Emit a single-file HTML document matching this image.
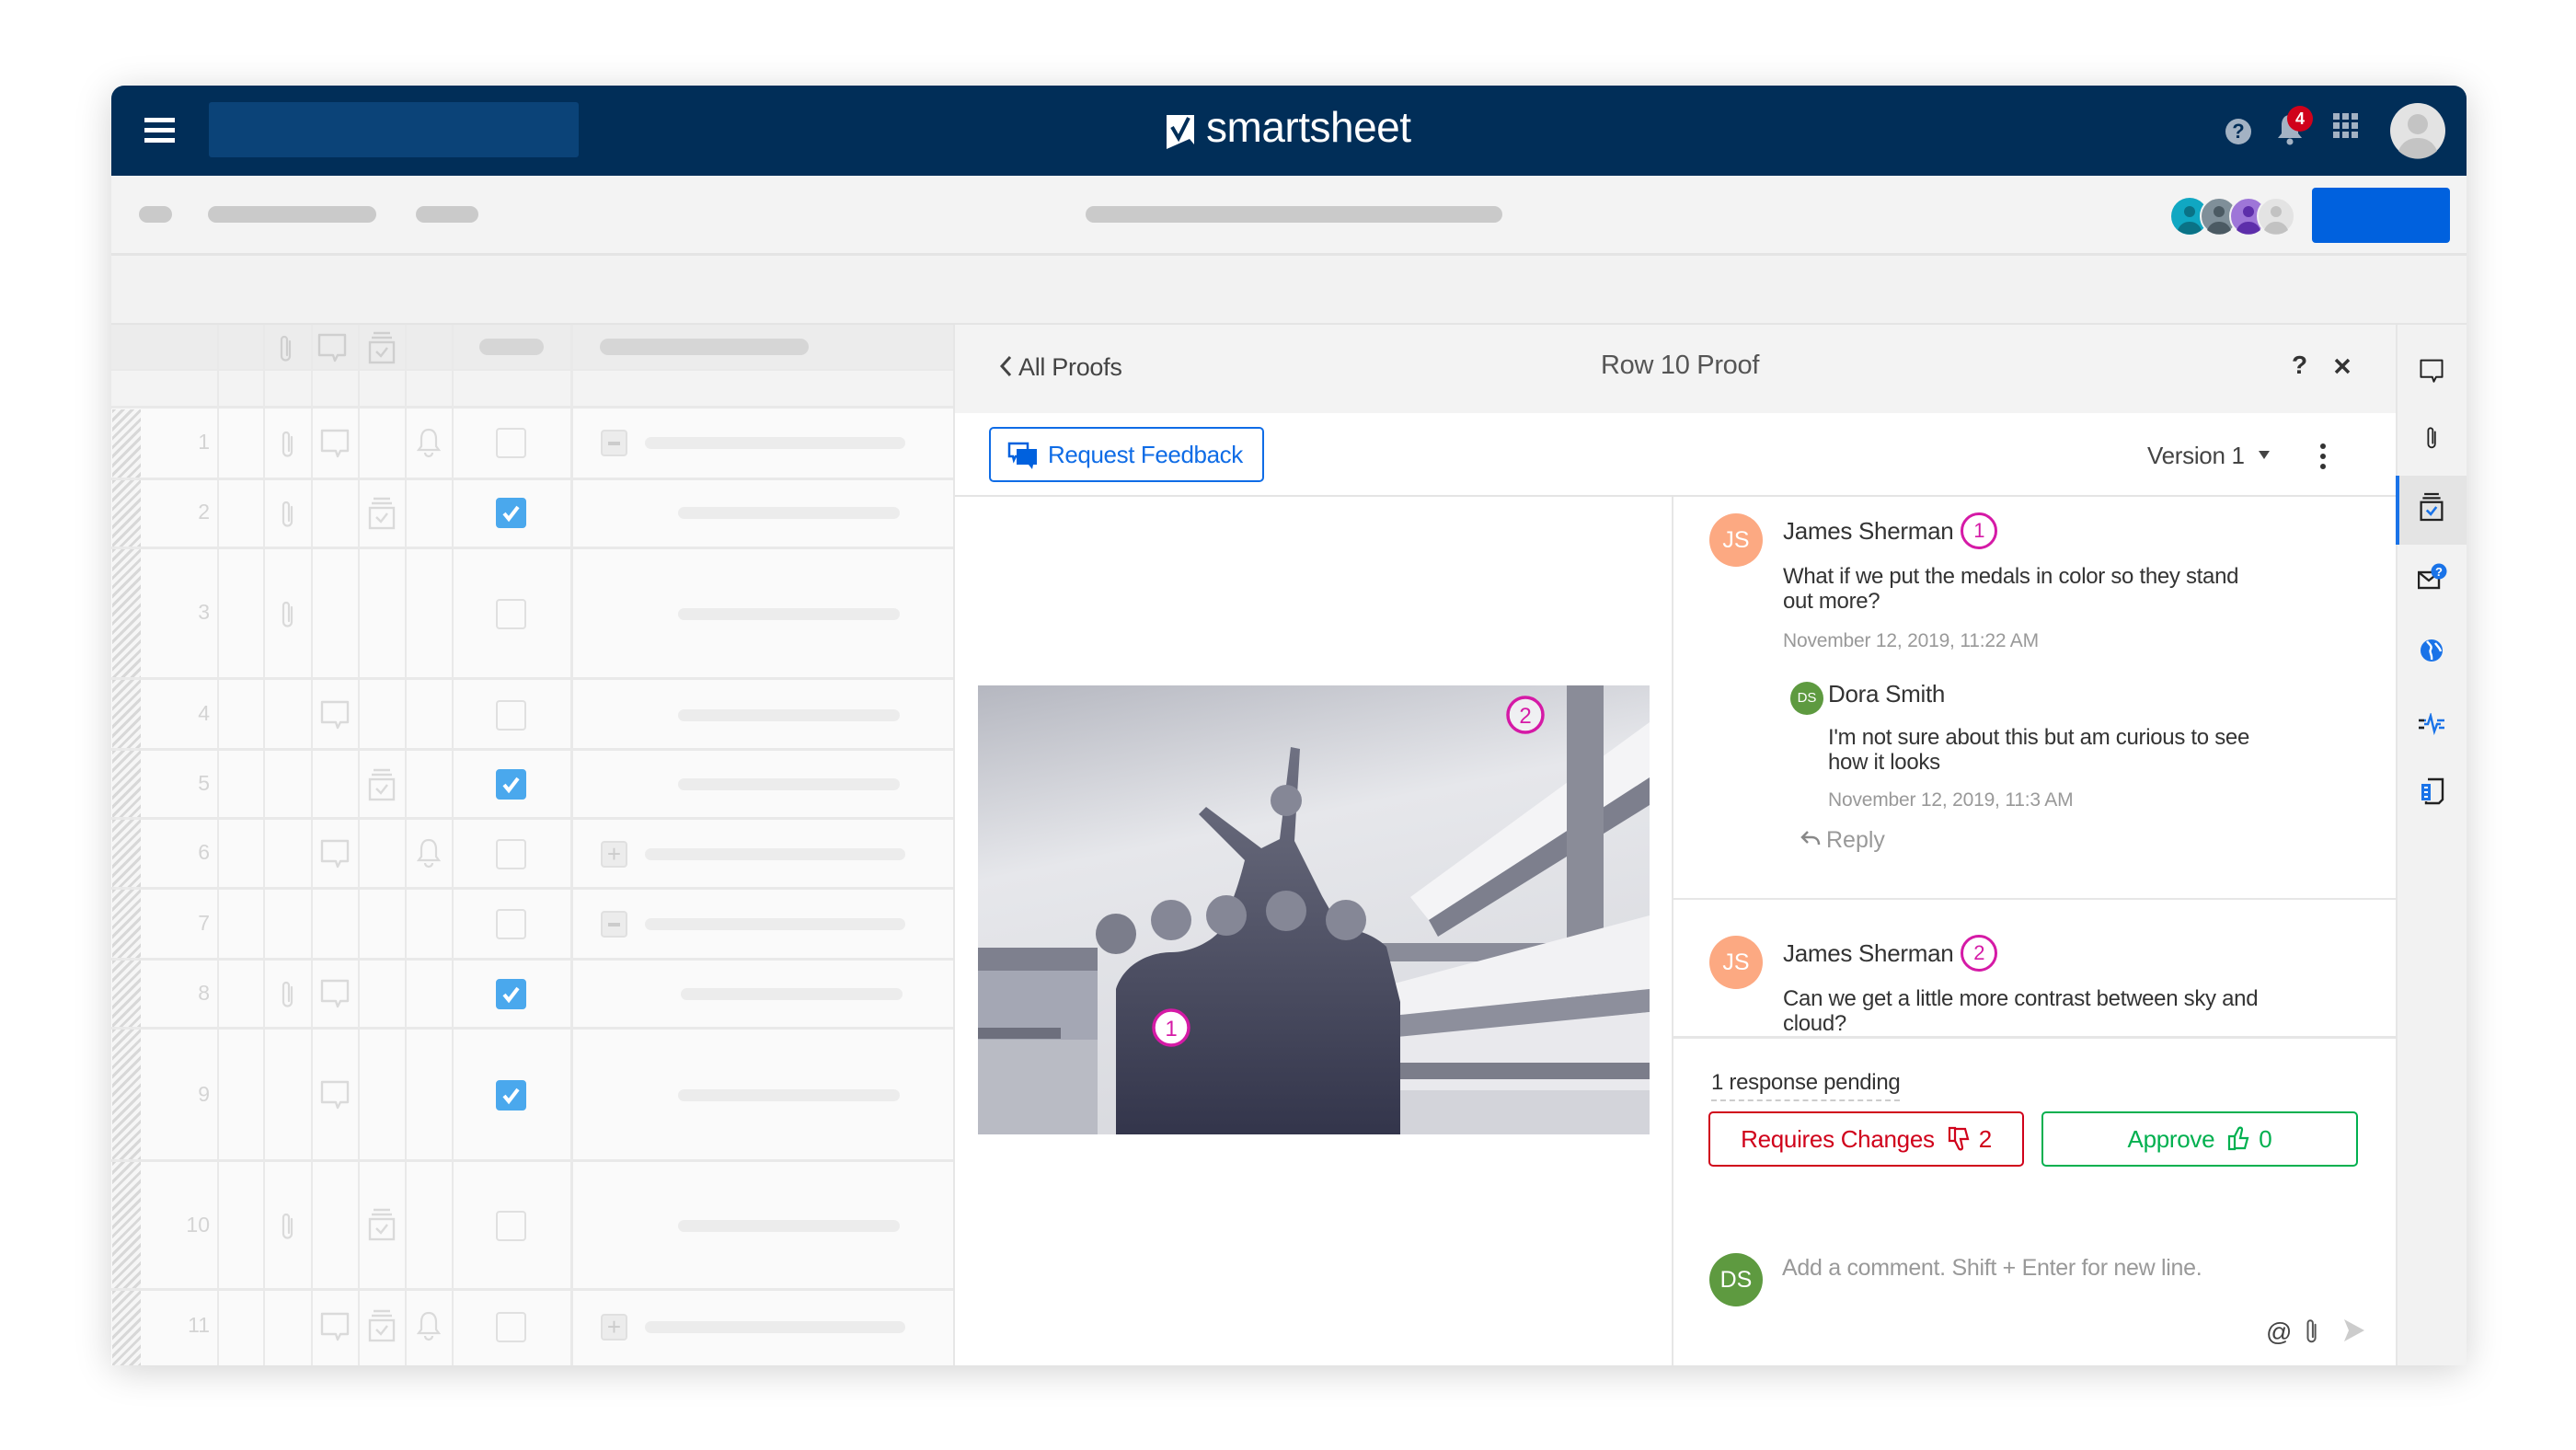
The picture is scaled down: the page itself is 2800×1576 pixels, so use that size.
<!DOCTYPE html>
<html><head><meta charset="utf-8"><style>
*{margin:0;padding:0;box-sizing:border-box}
body{width:2800px;height:1576px;background:#fff;font-family:"Liberation Sans",sans-serif;position:relative;overflow:hidden}
.a{position:absolute}
.win{left:121px;top:93px;width:2560px;height:1391px;border-radius:14px;overflow:hidden;box-shadow:0 6px 40px rgba(0,0,0,.18);background:#f2f2f2}
.pill{position:absolute;background:#cacaca;border-radius:10px}
.gl{position:absolute;background:#e9e9e9}
.bar{position:absolute;background:#ececec;border-radius:7px;height:13px}
.num{position:absolute;color:#d4d4d4;font-size:23px;width:40px;text-align:right;left:188px}
.cb{position:absolute;left:539px;width:33px;height:33px;border:2px solid #e0e0e0;border-radius:4px;background:#fafafa}
.cbx{background:#4aa8ed;border-color:#4aa8ed}
.t{position:absolute;white-space:nowrap}
.hatch{position:absolute;left:122px;width:31px;background:repeating-linear-gradient(135deg,#d8d8d8 0 3px,#f6f6f6 3px 7px)}
.nm{position:absolute;display:flex;align-items:center;gap:8px;font-size:26px;color:#333;white-space:nowrap;letter-spacing:-0.3px}
.bd{width:40px;height:40px;border-radius:50%;border:3px solid #d51aa6;color:#d51aa6;font-size:22px;text-align:center;line-height:34px;letter-spacing:0}
.bt{position:absolute;display:flex;align-items:center;justify-content:center;gap:14px;font-size:26px;height:60px;border-radius:5px;letter-spacing:-0.3px}
</style></head><body>
<svg width="0" height="0" style="position:absolute">
<defs>
<symbol id="clip" viewBox="0 0 20 34"><path d="M14 9v16a4.5 4.5 0 0 1-9 0V7a3 3 0 0 1 6 0v17" fill="none" stroke="currentColor" stroke-width="2.2" stroke-linecap="round"/></symbol>
<symbol id="cmt" viewBox="0 0 32 34"><path d="M2 2h28v22H22l-3 6-2-6H2z" fill="none" stroke="currentColor" stroke-width="2.4" stroke-linejoin="round"/></symbol>
<symbol id="prf" viewBox="0 0 32 36"><path d="M7 2h18M5 7h22" stroke="currentColor" stroke-width="2.4"/><rect x="3" y="12" width="26" height="22" fill="none" stroke="currentColor" stroke-width="2.4"/><path d="M10 22l5 5 7-9" fill="none" stroke="currentColor" stroke-width="2.4"/></symbol>
<symbol id="bell" viewBox="0 0 28 34"><path d="M14 3c-6 0-8 5-8 10v8l-3 4h22l-3-4v-8c0-5-2-10-8-10zM10 28a4 4 0 0 0 8 0" fill="none" stroke="currentColor" stroke-width="2.2"/></symbol>
</defs></svg>

<div class="a win">
 <div class="a" style="left:0;top:0;width:2560px;height:98px;background:#012e58"></div>
 <div class="a" style="left:36px;top:35px;width:33px;height:5px;background:#fff;box-shadow:0 11px 0 #fff,0 22px 0 #fff"></div>
 <div class="a" style="left:106px;top:18px;width:402px;height:60px;background:#0b4378;border-radius:3px"></div>
 <svg class="a" style="left:1147px;top:32px" width="30" height="37" viewBox="0 0 30 37"><path d="M0 0h30v32l-5-6-25 11z" fill="#fff"/><path d="M6 13l7 12 11-22" fill="none" stroke="#012e58" stroke-width="4"/></svg>
 <div class="t" style="left:1190px;top:18px;font-size:46px;color:#fff;letter-spacing:-0.5px">smartsheet</div>
 <div class="a" style="left:2298px;top:36px;width:28px;height:28px;border-radius:50%;background:#a3b2c3;color:#012e58;font-weight:bold;font-size:22px;text-align:center;line-height:28px">?</div>
 <svg class="a" style="left:2353px;top:27px" width="30" height="40" viewBox="0 0 30 40"><path d="M15 5c-7 0-9 6-9 11v9l-4 5h26l-4-5v-9c0-5-2-11-9-11z" fill="#a3b2c3"/><circle cx="15" cy="34" r="3.5" fill="#a3b2c3"/></svg>
 <div class="a" style="left:2365px;top:22px;width:28px;height:28px;border-radius:50%;background:#d0021b;color:#fff;font-size:18px;font-weight:bold;text-align:center;line-height:28px">4</div>
 <svg class="a" style="left:2415px;top:30px" width="28" height="28"><g fill="#a3b2c3"><rect x="0" y="0" width="7" height="7"/><rect x="10" y="0" width="7" height="7"/><rect x="20" y="0" width="7" height="7"/><rect x="0" y="10" width="7" height="7"/><rect x="10" y="10" width="7" height="7"/><rect x="20" y="10" width="7" height="7"/><rect x="0" y="20" width="7" height="7"/><rect x="10" y="20" width="7" height="7"/><rect x="20" y="20" width="7" height="7"/></g></svg>
 <svg class="a" style="left:2476px;top:18px" width="62" height="62"><circle cx="31" cy="31" r="30" fill="#e3e3e3"/><circle cx="31" cy="24" r="11" fill="#c4c4c4"/><path d="M10 53c4-10 12-14 21-14s17 4 21 14a30 30 0 0 1-42 0z" fill="#c4c4c4"/></svg>

 <div class="a" style="left:0;top:98px;width:2560px;height:87px;background:#f3f3f3;border-bottom:3px solid #e4e4e4"></div>
 <div class="pill" style="left:30px;top:131px;width:36px;height:18px"></div>
 <div class="pill" style="left:105px;top:131px;width:183px;height:18px"></div>
 <div class="pill" style="left:331px;top:131px;width:68px;height:18px"></div>
 <div class="pill" style="left:1059px;top:131px;width:453px;height:18px"></div>
 <svg class="a" style="left:2238px;top:121px" width="140" height="42">
  <circle cx="21" cy="21" r="20" fill="#10a7c2"/><circle cx="21" cy="16" r="6" fill="#0a7286"/><path d="M8 36c3-7 8-9 13-9s10 2 13 9a20 20 0 0 1-26 0z" fill="#0a7286"/>
  <circle cx="53" cy="21" r="20" fill="#7f8f99" stroke="#f3f3f3" stroke-width="2"/><circle cx="53" cy="16" r="6" fill="#4b5a63"/><path d="M40 36c3-7 8-9 13-9s10 2 13 9a20 20 0 0 1-26 0z" fill="#4b5a63"/>
  <circle cx="85" cy="21" r="20" fill="#9e76d8" stroke="#f3f3f3" stroke-width="2"/><circle cx="85" cy="16" r="6" fill="#5d2eaa"/><path d="M72 36c3-7 8-9 13-9s10 2 13 9a20 20 0 0 1-26 0z" fill="#5d2eaa"/>
  <circle cx="115" cy="21" r="20" fill="#e3e3e3" stroke="#f3f3f3" stroke-width="2"/><circle cx="115" cy="16" r="6" fill="#c2c2c2"/><path d="M102 36c3-7 8-9 13-9s10 2 13 9a20 20 0 0 1-26 0z" fill="#c2c2c2"/>
 </svg>
 <div class="a" style="left:2392px;top:111px;width:150px;height:60px;background:#0061de;border-radius:4px"></div>
 <div class="a" style="left:0;top:258px;width:2560px;height:3px;background:#e4e4e4"></div>
</div>

<!-- grid -->
<div class="a" style="left:121px;top:353px;width:917px;height:1131px;background:#fafafa"></div>
<div class="a" style="left:121px;top:353px;width:917px;height:90px;background:#ececec"></div>
<div class="a" style="left:121px;top:402px;width:917px;height:41px;background:#f3f3f3"></div>
<div class="gl" style="left:121px;top:401px;width:917px;height:2px"></div>
<div class="gl" style="left:121px;top:441px;width:917px;height:3px"></div>
<div class="gl" style="left:236px;top:353px;width:2px;height:1131px"></div>
<div class="gl" style="left:286px;top:353px;width:2px;height:1131px"></div>
<div class="gl" style="left:338px;top:353px;width:2px;height:1131px"></div>
<div class="gl" style="left:389px;top:353px;width:2px;height:1131px"></div>
<div class="gl" style="left:440px;top:353px;width:2px;height:1131px"></div>
<div class="gl" style="left:491px;top:353px;width:2px;height:1131px"></div>
<div class="gl" style="left:620px;top:353px;width:3px;height:1131px"></div>
<div class="pill" style="left:521px;top:368px;width:70px;height:18px;background:#d6d6d6"></div>
<div class="pill" style="left:652px;top:368px;width:227px;height:18px;background:#d6d6d6"></div>
<svg class="a" style="left:301px;top:362px;color:#cfcfcf" width="20" height="34"><use href="#clip"/></svg>
<svg class="a" style="left:345px;top:362px;color:#cfcfcf" width="32" height="34"><use href="#cmt"/></svg>
<svg class="a" style="left:399px;top:360px;color:#cfcfcf" width="32" height="36"><use href="#prf"/></svg>

<div class="hatch" style="top:445px;height:74px"></div><div class="gl" style="left:121px;top:519px;width:917px;height:3px"></div>
<div class="hatch" style="top:522px;height:72px"></div><div class="gl" style="left:121px;top:594px;width:917px;height:3px"></div>
<div class="hatch" style="top:597px;height:139px"></div><div class="gl" style="left:121px;top:736px;width:917px;height:3px"></div>
<div class="hatch" style="top:739px;height:74px"></div><div class="gl" style="left:121px;top:813px;width:917px;height:3px"></div>
<div class="hatch" style="top:816px;height:72px"></div><div class="gl" style="left:121px;top:888px;width:917px;height:3px"></div>
<div class="hatch" style="top:891px;height:73px"></div><div class="gl" style="left:121px;top:964px;width:917px;height:3px"></div>
<div class="hatch" style="top:967px;height:74px"></div><div class="gl" style="left:121px;top:1041px;width:917px;height:3px"></div>
<div class="hatch" style="top:1044px;height:72px"></div><div class="gl" style="left:121px;top:1116px;width:917px;height:3px"></div>
<div class="hatch" style="top:1119px;height:141px"></div><div class="gl" style="left:121px;top:1260px;width:917px;height:3px"></div>
<div class="hatch" style="top:1263px;height:137px"></div><div class="gl" style="left:121px;top:1400px;width:917px;height:3px"></div>
<div class="hatch" style="top:1403px;height:81px"></div>

<div class="num" style="top:467px">1</div><div class="num" style="top:543px">2</div><div class="num" style="top:652px">3</div>
<div class="num" style="top:762px">4</div><div class="num" style="top:838px">5</div><div class="num" style="top:913px">6</div>
<div class="num" style="top:990px">7</div><div class="num" style="top:1066px">8</div><div class="num" style="top:1176px">9</div>
<div class="num" style="top:1318px">10</div><div class="num" style="top:1427px">11</div>

<div style="color:#dadada">
<svg class="a" style="left:303px;top:466px" width="20" height="34"><use href="#clip"/></svg>
<svg class="a" style="left:348px;top:466px" width="32" height="34"><use href="#cmt"/></svg>
<svg class="a" style="left:452px;top:464px" width="28" height="34"><use href="#bell"/></svg>
<svg class="a" style="left:303px;top:542px" width="20" height="34"><use href="#clip"/></svg>
<svg class="a" style="left:399px;top:540px" width="32" height="36"><use href="#prf"/></svg>
<svg class="a" style="left:303px;top:651px" width="20" height="34"><use href="#clip"/></svg>
<svg class="a" style="left:348px;top:761px" width="32" height="34"><use href="#cmt"/></svg>
<svg class="a" style="left:399px;top:835px" width="32" height="36"><use href="#prf"/></svg>
<svg class="a" style="left:348px;top:912px" width="32" height="34"><use href="#cmt"/></svg>
<svg class="a" style="left:452px;top:910px" width="28" height="34"><use href="#bell"/></svg>
<svg class="a" style="left:303px;top:1064px" width="20" height="34"><use href="#clip"/></svg>
<svg class="a" style="left:348px;top:1064px" width="32" height="34"><use href="#cmt"/></svg>
<svg class="a" style="left:348px;top:1174px" width="32" height="34"><use href="#cmt"/></svg>
<svg class="a" style="left:303px;top:1316px" width="20" height="34"><use href="#clip"/></svg>
<svg class="a" style="left:399px;top:1313px" width="32" height="36"><use href="#prf"/></svg>
<svg class="a" style="left:348px;top:1426px" width="32" height="34"><use href="#cmt"/></svg>
<svg class="a" style="left:399px;top:1423px" width="32" height="36"><use href="#prf"/></svg>
<svg class="a" style="left:452px;top:1424px" width="28" height="34"><use href="#bell"/></svg>
</div>

<div class="cb" style="top:465px"></div>
<div class="cb cbx" style="top:541px"></div>
<div class="cb" style="top:651px"></div>
<div class="cb" style="top:761px"></div>
<div class="cb cbx" style="top:836px"></div>
<div class="cb" style="top:912px"></div>
<div class="cb" style="top:988px"></div>
<div class="cb cbx" style="top:1064px"></div>
<div class="cb cbx" style="top:1174px"></div>
<div class="cb" style="top:1316px"></div>
<div class="cb" style="top:1426px"></div>
<svg class="a" style="left:541px;top:543px" width="29" height="29"><path d="M7 15l5 6 10-13" fill="none" stroke="#fff" stroke-width="4"/></svg>
<svg class="a" style="left:541px;top:838px" width="29" height="29"><path d="M7 15l5 6 10-13" fill="none" stroke="#fff" stroke-width="4"/></svg>
<svg class="a" style="left:541px;top:1066px" width="29" height="29"><path d="M7 15l5 6 10-13" fill="none" stroke="#fff" stroke-width="4"/></svg>
<svg class="a" style="left:541px;top:1176px" width="29" height="29"><path d="M7 15l5 6 10-13" fill="none" stroke="#fff" stroke-width="4"/></svg>

<div class="a" style="left:653px;top:467px;width:29px;height:29px;border:2px solid #e0e0e0;border-radius:4px;background:#ececec"><div class="a" style="left:6px;top:11px;width:13px;height:4px;background:#ccc"></div></div>
<div class="bar" style="left:701px;top:475px;width:283px"></div>
<div class="bar" style="left:737px;top:551px;width:241px"></div>
<div class="bar" style="left:737px;top:661px;width:241px"></div>
<div class="bar" style="left:737px;top:771px;width:241px"></div>
<div class="bar" style="left:737px;top:846px;width:241px"></div>
<div class="a" style="left:653px;top:914px;width:29px;height:29px;border:2px solid #e0e0e0;border-radius:4px;background:#ececec;color:#ccc;font-size:26px;line-height:24px;text-align:center">+</div>
<div class="bar" style="left:701px;top:922px;width:283px"></div>
<div class="a" style="left:653px;top:990px;width:29px;height:29px;border:2px solid #e0e0e0;border-radius:4px;background:#ececec"><div class="a" style="left:6px;top:11px;width:13px;height:4px;background:#ccc"></div></div>
<div class="bar" style="left:701px;top:998px;width:283px"></div>
<div class="bar" style="left:740px;top:1074px;width:241px"></div>
<div class="bar" style="left:737px;top:1184px;width:241px"></div>
<div class="bar" style="left:737px;top:1326px;width:241px"></div>
<div class="a" style="left:653px;top:1428px;width:29px;height:29px;border:2px solid #e0e0e0;border-radius:4px;background:#ececec;color:#ccc;font-size:26px;line-height:24px;text-align:center">+</div>
<div class="bar" style="left:701px;top:1436px;width:283px"></div>

<!-- proof panel -->
<div class="a" style="left:1036px;top:353px;width:1568px;height:1131px;background:#fff;border-left:2px solid #e6e6e6"></div>
<div class="a" style="left:1038px;top:353px;width:1566px;height:96px;background:#f3f3f3"></div>
<svg class="a" style="left:1086px;top:386px" width="16" height="24"><path d="M12 2L3 12l9 10" fill="none" stroke="#444" stroke-width="3"/></svg>
<div class="t" style="left:1107px;top:384px;font-size:27px;color:#444;letter-spacing:-0.3px">All Proofs</div>
<div class="t" style="left:1740px;top:381px;font-size:29px;color:#555;letter-spacing:-0.3px">Row 10 Proof</div>
<div class="t" style="left:2491px;top:381px;font-size:28px;color:#333;font-weight:bold">?</div>
<svg class="a" style="left:2536px;top:388px" width="20" height="20"><path d="M3 3l14 14M17 3L3 17" stroke="#333" stroke-width="3.5"/></svg>
<div class="a" style="left:1038px;top:538px;width:1566px;height:2px;background:#e4e4e4"></div>
<div class="a" style="left:1075px;top:464px;width:299px;height:60px;border:2px solid #0f6ce6;border-radius:5px"></div>
<svg class="a" style="left:1095px;top:480px" width="34" height="32" viewBox="0 0 34 32"><path d="M2 2h20v14H9l-2 4-1-4H2z" fill="#fff" stroke="#0061de" stroke-width="2.5"/><path d="M10 8h22v17h-4l-1 5-4-5H10z" fill="#0061de"/></svg>
<div class="t" style="left:1139px;top:479px;font-size:26px;color:#0f6ce6;letter-spacing:-0.4px">Request Feedback</div>
<div class="t" style="left:2334px;top:480px;font-size:26px;color:#444;letter-spacing:-0.3px">Version 1</div>
<svg class="a" style="left:2455px;top:490px" width="12" height="10"><path d="M0 0h12L6 9z" fill="#444"/></svg>
<div class="a" style="left:2522px;top:482px;width:6px;height:6px;border-radius:50%;background:#333;box-shadow:0 11px 0 #333,0 22px 0 #333"></div>
<div class="a" style="left:1817px;top:540px;width:2px;height:944px;background:#e6e6e6"></div>

<!-- image -->
<svg class="a" style="left:1063px;top:745px" width="730" height="488" viewBox="0 0 730 488">
 <defs>
  <linearGradient id="sky" x1="0" y1="0" x2="0.3" y2="1"><stop offset="0" stop-color="#b5b7c0"/><stop offset="0.4" stop-color="#e6e7eb"/><stop offset="1" stop-color="#d9dadf"/></linearGradient>
  <linearGradient id="ppl" x1="0" y1="0" x2="0" y2="1"><stop offset="0" stop-color="#6f7182"/><stop offset="1" stop-color="#33354b"/></linearGradient>
 </defs>
 <rect width="730" height="488" fill="url(#sky)"/>
 <rect x="0" y="300" width="130" height="90" fill="#a4a7b4"/>
 <rect x="0" y="285" width="130" height="25" fill="#7e808e"/>
 <rect x="0" y="385" width="130" height="103" fill="#b9bbc4"/>
 <rect x="0" y="372" width="90" height="12" fill="#6d6f7d"/>
 <path d="M730 40L470 230l20 25L730 100z" fill="#f4f4f6"/>
 <path d="M730 100L490 255l10 18L730 130z" fill="#7d7f8d"/>
 <path d="M640 0h40v488h-40z" fill="#8a8c98"/>
 <path d="M430 280h230v20H430z" fill="#8a8c99"/>
 <path d="M430 330L730 250v80L440 360z" fill="#f2f2f4"/>
 <path d="M440 360L730 330v25L440 385z" fill="#8d8f9c"/>
 <path d="M425 385L730 355v133H425z" fill="#e9e9ed"/>
 <path d="M430 410h300v18H430z" fill="#7b7d8a"/>
 <path d="M440 440L730 440v48H440z" fill="#d3d4da"/>
 <path d="M290 190l-50-50 8-8 60 45 20-10 12-100 10 2-6 100 30 60 20 35c20 0 40 10 50 20l15 60v145H150V330c10-30 40-40 60-40 20 0 40-10 50-20 10-20 20-40 30-80z" fill="url(#ppl)"/>
 <circle cx="150" cy="270" r="22" fill="#7b7d8b"/><circle cx="210" cy="255" r="22" fill="#858796"/><circle cx="270" cy="250" r="22" fill="#858796"/><circle cx="335" cy="245" r="22" fill="#858796"/><circle cx="400" cy="255" r="22" fill="#858796"/><circle cx="335" cy="125" r="17" fill="#858796"/>
 <circle cx="595" cy="32" r="19" fill="#fff" fill-opacity=".6" stroke="#d51aa6" stroke-width="3.5"/><text x="595" y="41" text-anchor="middle" font-family="Liberation Sans" font-size="24" fill="#d51aa6">2</text>
 <circle cx="210" cy="372" r="19" fill="#fff" stroke="#d51aa6" stroke-width="3.5"/><text x="210" y="381" text-anchor="middle" font-family="Liberation Sans" font-size="24" fill="#d51aa6">1</text>
</svg>

<!-- comments -->
<div class="a" style="left:1858px;top:558px;width:58px;height:58px;border-radius:50%;background:#fca982;color:#fff;font-size:25px;text-align:center;line-height:58px">JS</div>
<div class="nm" style="left:1938px;top:557px">James Sherman<div class="bd">1</div></div>
<div class="t" style="left:1938px;top:613px;font-size:24px;color:#333;line-height:27px;letter-spacing:-0.3px">What if we put the medals in color so they stand<br>out more?</div>
<div class="t" style="left:1938px;top:685px;font-size:21px;color:#999;letter-spacing:-0.2px">November 12, 2019, 11:22 AM</div>
<div class="a" style="left:1946px;top:741px;width:36px;height:36px;border-radius:50%;background:#5e9a40;color:#fff;font-size:15px;text-align:center;line-height:36px">DS</div>
<div class="t" style="left:1987px;top:739px;font-size:26px;color:#333;letter-spacing:-0.3px">Dora Smith</div>
<div class="t" style="left:1987px;top:788px;font-size:24px;color:#333;line-height:27px;letter-spacing:-0.3px">I'm not sure about this but am curious to see<br>how it looks</div>
<div class="t" style="left:1987px;top:858px;font-size:21px;color:#999;letter-spacing:-0.2px">November 12, 2019, 11:3 AM</div>
<svg class="a" style="left:1957px;top:902px" width="22" height="18"><path d="M8 2L2 8l6 6M2 8h10c5 0 8 3 8 8" fill="none" stroke="#888" stroke-width="2.5"/></svg>
<div class="t" style="left:1985px;top:899px;font-size:25px;color:#999">Reply</div>
<div class="a" style="left:1819px;top:976px;width:785px;height:2px;background:#e6e6e6"></div>

<div class="a" style="left:1858px;top:1017px;width:58px;height:58px;border-radius:50%;background:#fca982;color:#fff;font-size:25px;text-align:center;line-height:58px">JS</div>
<div class="nm" style="left:1938px;top:1016px">James Sherman<div class="bd">2</div></div>
<div class="t" style="left:1938px;top:1072px;font-size:24px;color:#333;line-height:27px;letter-spacing:-0.3px">Can we get a little more contrast between sky and<br>cloud?</div>
<div class="a" style="left:1819px;top:1126px;width:785px;height:3px;background:#e6e6e6"></div>

<div class="t" style="left:1860px;top:1163px;font-size:24px;color:#333;border-bottom:2px dashed #ccc;padding-bottom:4px;letter-spacing:-0.3px">1 response pending</div>
<div class="bt" style="left:1857px;top:1208px;width:343px;border:2px solid #d0021b;color:#d0021b"><span>Requires Changes</span><svg width="24" height="28" viewBox="0 0 24 28"><path d="M2 2h6v14H2zM8 3h11l3 11h-8l2 9c0 3-3 3-4 1l-4-8" fill="none" stroke="#d0021b" stroke-width="2.2"/></svg><span style="margin-left:-4px">2</span></div>
<div class="bt" style="left:2219px;top:1208px;width:344px;border:2px solid #00b04f;color:#00b04f"><span>Approve</span><svg width="24" height="30" viewBox="0 0 24 30"><path d="M2 12h6v14H2zM8 25h11l3-11h-8l2-9c0-3-3-3-4-1l-4 8" fill="none" stroke="#00b04f" stroke-width="2.2"/></svg><span style="margin-left:-4px">0</span></div>

<div class="a" style="left:1858px;top:1362px;width:58px;height:58px;border-radius:50%;background:#5e9a40;color:#fff;font-size:25px;text-align:center;line-height:58px">DS</div>
<div class="t" style="left:1937px;top:1364px;font-size:25px;color:#999;letter-spacing:-0.3px">Add a comment. Shift + Enter for new line.</div>
<div class="t" style="left:2463px;top:1432px;font-size:28px;color:#444">@</div>
<svg class="a" style="left:2504px;top:1431px;color:#555" width="18" height="32"><use href="#clip"/></svg>
<svg class="a" style="left:2546px;top:1433px" width="24" height="26"><path d="M2 1l22 12L2 25l5-12z" fill="#ccc"/></svg>

<!-- right rail -->
<div class="a" style="left:2604px;top:353px;width:77px;height:1131px;background:#f2f2f2;border-left:2px solid #e6e6e6"></div>
<div class="a" style="left:2604px;top:517px;width:77px;height:75px;background:#e4e4e4"></div>
<div class="a" style="left:2604px;top:517px;width:4px;height:75px;background:#1a73e8"></div>
<svg class="a" style="left:2629px;top:390px;color:#222" width="28" height="28"><use href="#cmt"/></svg>
<svg class="a" style="left:2635px;top:462px;color:#222" width="17" height="28"><use href="#clip"/></svg>
<svg class="a" style="left:2629px;top:535px" width="28" height="32" viewBox="0 0 32 36"><path d="M7 2h18M5 7h22" stroke="#222" stroke-width="2.6"/><rect x="3" y="12" width="26" height="22" fill="none" stroke="#222" stroke-width="2.6"/><path d="M10 22l5 5 7-9" fill="none" stroke="#1a73e8" stroke-width="3"/></svg>
<svg class="a" style="left:2628px;top:612px" width="32" height="32"><rect x="1" y="10" width="22" height="17" fill="none" stroke="#222" stroke-width="2.4"/><path d="M1 10l11 9 11-9" fill="none" stroke="#222" stroke-width="2.4"/><circle cx="23" cy="9" r="8.5" fill="#1a73e8"/><text x="23" y="14" text-anchor="middle" font-family="Liberation Sans" font-weight="bold" font-size="13" fill="#fff">?</text></svg>
<svg class="a" style="left:2630px;top:694px" width="26" height="26"><circle cx="13" cy="13" r="12" fill="#1a73e8"/><path d="M8 3c3 4 6 5 4 9-2 3 2 5 1 11M17 5c2 3 5 5 6 9" fill="none" stroke="#fff" stroke-width="2.4"/></svg>
<svg class="a" style="left:2628px;top:775px" width="30" height="24"><path d="M1 8h8M1 16h6M21 8h8M23 16h6M7 12h4l3-9 4 17 3-8h4" fill="none" stroke="#1a73e8" stroke-width="2.4"/><path d="M1 8h6M1 16h6" stroke="#222" stroke-width="2.4"/></svg>
<svg class="a" style="left:2629px;top:845px" width="28" height="30"><path d="M10 2h16v22l-4 4H8V26" fill="none" stroke="#222" stroke-width="2.4"/><rect x="3" y="7" width="10" height="18" fill="#1a73e8"/><path d="M6 11h4M6 16h4M6 21h4" stroke="#fff" stroke-width="2"/></svg>
</body></html>
